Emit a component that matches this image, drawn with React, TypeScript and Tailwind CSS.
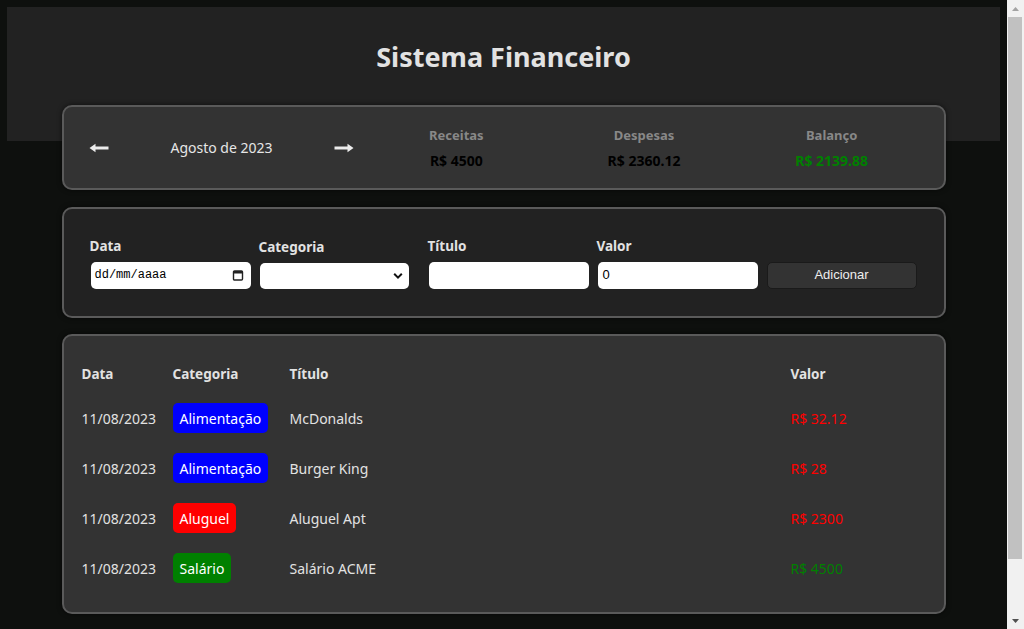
import React from "react";

const font = { fontFamily: '"Noto Sans", "Open Sans", sans-serif' };
const arial = { fontFamily: '"Liberation Sans", Arial, sans-serif' };

function ArrowLeft() {
  return (
    <svg width="20" height="10" viewBox="0 0 20 10">
      <path d="M0.5 5 L6.5 0.8 L6.5 3.6 L19.5 3.6 L19.5 6.4 L6.5 6.4 L6.5 9.2 Z" fill="#ececec" />
    </svg>
  );
}
function ArrowRight() {
  return (
    <svg width="20" height="10" viewBox="0 0 20 10">
      <path d="M19.5 5 L13.5 0.8 L13.5 3.6 L0.5 3.6 L0.5 6.4 L13.5 6.4 L13.5 9.2 Z" fill="#ececec" />
    </svg>
  );
}

const rows = [
  { date: "11/08/2023", cat: "Alimentação", color: "bg-[#0000ff]", title: "McDonalds", value: "R$ 32.12", vc: "text-[#ff0000]" },
  { date: "11/08/2023", cat: "Alimentação", color: "bg-[#0000ff]", title: "Burger King", value: "R$ 28", vc: "text-[#ff0000]" },
  { date: "11/08/2023", cat: "Aluguel", color: "bg-[#ff0000]", title: "Aluguel Apt", value: "R$ 2300", vc: "text-[#ff0000]" },
  { date: "11/08/2023", cat: "Salário", color: "bg-[#008000]", title: "Salário ACME", value: "R$ 4500", vc: "text-[#008000]" },
];

function InfoCol({ label, value, color }: { label: string; value: string; color: string }) {
  return (
    <div className="flex flex-col items-center">
      <span className="text-[13px] font-bold leading-[20px] text-[#888888]">{label}</span>
      <span className={`mt-[6px] text-[14px] font-bold leading-[20px] ${color}`}>{value}</span>
    </div>
  );
}

function Field({ label, children }: { label: string; children: React.ReactNode }) {
  return (
    <div className="flex w-[160px] flex-col">
      <span className="mb-[7px] text-[13.5px] font-bold leading-[18px] text-[#e2e2e2]">{label}</span>
      {children}
    </div>
  );
}

export default function App() {
  return (
    <div className="flex h-[629px] overflow-hidden bg-[#0e100e]" style={font}>
      <div className="h-[629px] flex-1 overflow-hidden">
        <div className="min-h-[690px] p-[7px]">
          <div className="h-[134px] bg-[#222222] pt-[32px]">
            <h1 className="text-center text-[27px] font-bold leading-[36px] text-[#e2e2e2]">Sistema Financeiro</h1>
          </div>

          <div className="mx-auto -mt-[36px] w-[884px]">
            {/* Info card */}
            <div className="flex h-[85px] items-center rounded-[10px] border-2 border-[#5a5a5a] bg-[#333333] px-[18px] shadow-[0_0_5px_rgba(0,0,0,0.6)]">
              <div className="flex w-[281px] shrink-0 items-center justify-between pl-[7px] pr-[8px]">
                <ArrowLeft />
                <span className="text-[14px] text-[#e6e6e6]">Agosto de 2023</span>
                <ArrowRight />
              </div>
              <div className="grid w-[563px] shrink-0 grid-cols-3">
                <InfoCol label="Receitas" value="R$ 4500" color="text-[#000000]" />
                <InfoCol label="Despesas" value="R$ 2360.12" color="text-[#000000]" />
                <InfoCol label="Balanço" value="R$ 2139.88" color="text-[#008000]" />
              </div>
            </div>

            {/* Form card */}
            <div className="mt-[17px] flex h-[111px] items-center rounded-[10px] border-2 border-[#5a5a5a] bg-[#222222] pl-[26px] shadow-[0_0_5px_rgba(0,0,0,0.6)]">
              <div className="flex items-end gap-[9px]">
                <Field label="Data">
                  <div className="ml-[1px] flex h-[27px] w-[160px] items-center justify-between rounded-[5px] bg-white pl-[4px] pr-[7px]">
                    <span className="text-[12px] text-black" style={{ fontFamily: '"Liberation Mono", monospace' }}>dd/mm/aaaa</span>
                    <svg width="12" height="12" viewBox="0 0 12 12">
                      <rect x="1.5" y="2" width="9" height="9" rx="1" fill="none" stroke="#222" strokeWidth="1.4" />
                      <rect x="1.5" y="2" width="9" height="2.5" fill="#222" />
                    </svg>
                  </div>
                </Field>
                <Field label="Categoria">
                  <div className="ml-[1px] flex h-[26px] w-[149px] items-center justify-end rounded-[5px] bg-white pr-[6px]">
                    <svg width="10" height="8" viewBox="0 0 10 8">
                      <path d="M1.2 1.8 L5 5.6 L8.8 1.8" fill="none" stroke="#111" strokeWidth="2" />
                    </svg>
                  </div>
                </Field>
                <Field label="Título">
                  <div className="ml-[1px] h-[27px] w-[160px] rounded-[5px] bg-white" />
                </Field>
                <Field label="Valor">
                  <div className="ml-[1px] flex h-[27px] w-[160px] items-center rounded-[5px] bg-white pl-[5px]">
                    <span className="text-[13px] text-black" style={arial}>0</span>
                  </div>
                </Field>
                <div className="ml-[1px] flex h-[27px] w-[150px] items-center justify-center rounded-[5px] border border-[#1a1a1a] bg-[#333333]">
                  <span className="text-[13px] text-[#eeeeee]" style={arial}>Adicionar</span>
                </div>
              </div>
            </div>

            {/* Table card */}
            <div className="mt-[16px] rounded-[10px] border-2 border-[#5a5a5a] bg-[#333333] px-[18px] pb-[19px] pt-[20px] shadow-[0_0_5px_rgba(0,0,0,0.6)]">
              <div className="grid h-[37px] grid-cols-[91px_117px_501px_1fr] items-center text-[13.5px] font-bold text-[#e2e2e2]">
                <span>Data</span>
                <span>Categoria</span>
                <span>Título</span>
                <span>Valor</span>
              </div>
              {rows.map((r, i) => (
                <div key={i} className="grid h-[50px] grid-cols-[91px_117px_501px_1fr] items-center text-[14px] text-[#e2e2e2]">
                  <span>{r.date}</span>
                  <span>
                    <span className={`inline-flex h-[30px] items-center rounded-[5px] px-[7px] text-white ${r.color}`}>{r.cat}</span>
                  </span>
                  <span>{r.title}</span>
                  <span className={r.vc}>{r.value}</span>
                </div>
              ))}
            </div>
          </div>
        </div>
      </div>

      {/* Scrollbar */}
      <div className="flex h-[629px] w-[17px] shrink-0 flex-col bg-[#f1f1f1]">
        <div className="flex h-[17px] items-center justify-center">
          <svg width="7" height="4" viewBox="0 0 7 4"><path d="M0 4 L3.5 0 L7 4 Z" fill="#a3a3a3" /></svg>
        </div>
        <div className="ml-[1px] h-[542px] w-[14px] bg-[#c1c1c1]" />
        <div className="flex-1" />
        <div className="flex h-[17px] items-center justify-center">
          <svg width="7" height="4" viewBox="0 0 7 4"><path d="M0 0 L3.5 4 L7 0 Z" fill="#505050" /></svg>
        </div>
      </div>
    </div>
  );
}
